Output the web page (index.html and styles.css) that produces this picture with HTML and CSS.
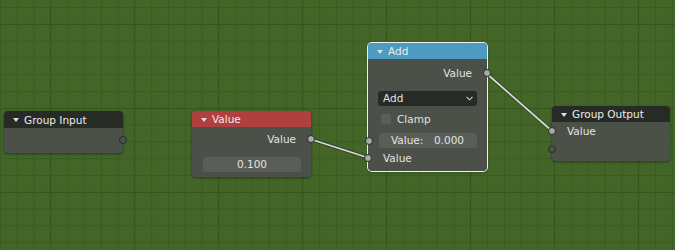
FILE: index.html
```html
<!DOCTYPE html>
<html lang="en">
  <head>
    <meta charset="UTF-8" />
    <title>Node Editor</title>
    <link rel="stylesheet" href="styles.css">
  </head>
  <body>
    <div class="canvas">
      <!-- links are drawn under the nodes -->
      <svg class="links" width="675" height="250" viewBox="0 0 675 250">
        <line class="link-shadow" x1="310" y1="139" x2="369" y2="158" />
        <line class="link" x1="310" y1="139" x2="369" y2="158" />
        <line class="link-shadow" x1="486" y1="73" x2="552" y2="131" />
        <line class="link" x1="486" y1="73" x2="552" y2="131" />
      </svg>

      <div class="node group-input">
        <div class="node-header">
          <span class="arrow"></span>Group Input
        </div>
        <div class="node-body">
          <div class="row row-out">
            <span class="socket socket-right hollow"></span>
          </div>
        </div>
      </div>

      <div class="node value-node">
        <div class="node-header red">
          <span class="arrow"></span>Value
        </div>
        <div class="node-body">
          <div class="row row-out">
            Value
            <span class="socket socket-right"></span>
          </div>
          <div class="field center">0.100</div>
        </div>
      </div>

      <div class="node add-node selected">
        <div class="node-header blue">
          <span class="arrow"></span>Add
        </div>
        <div class="node-body">
          <div class="row row-out">
            Value
            <span class="socket socket-right"></span>
          </div>
          <div class="dropdown">
            <span>Add</span>
            <svg class="chevron" width="7" height="5" viewBox="0 0 7 5">
              <path d="M0.5 0.8 L3.5 3.8 L6.5 0.8" />
            </svg>
          </div>
          <div class="check-row">
            <span class="checkbox"></span>
            Clamp
          </div>
          <div class="field split">
            <span>Value:</span>
            <span>0.000</span>
            <span class="socket socket-left field-socket"></span>
          </div>
          <div class="row row-in">
            Value
            <span class="socket socket-left"></span>
          </div>
        </div>
      </div>

      <div class="node group-output">
        <div class="node-header">
          <span class="arrow"></span>Group Output
        </div>
        <div class="node-body">
          <div class="row row-in">
            Value
            <span class="socket socket-left"></span>
          </div>
          <div class="row row-in">
            <span class="socket socket-left hollow"></span>
          </div>
        </div>
      </div>
    </div>
  </body>
</html>
```

FILE: styles.css
```css
body {
  margin: 0;
  padding: 0;
  background-color: #436628;
  font-family: "DejaVu Sans", "Liberation Sans", sans-serif;
  font-size: 10.5px;
  color: #e2e2e2;
}

.canvas {
  position: relative;
  width: 675px;
  height: 250px;
  overflow: hidden;
  background-color: #436628;
  background-image:
    linear-gradient(to right, #36541f 1px, transparent 1px),
    linear-gradient(to bottom, #36541f 1px, transparent 1px),
    linear-gradient(to right, #3a5b23 1px, transparent 1px),
    linear-gradient(to bottom, #3a5b23 1px, transparent 1px);
  background-size: 84px 84px, 84px 84px, 16.8px 16.8px, 16.8px 16.8px;
  background-position: 50px 0, 0 24px, 0 0, 0 7px;
}

.links {
  position: absolute;
  left: 0;
  top: 0;
}

.link-shadow {
  stroke: rgba(30, 30, 30, 0.4);
  stroke-width: 3.5;
  stroke-linecap: round;
}

.link {
  stroke: #d8d8d8;
  stroke-width: 1.8;
  stroke-linecap: round;
}

/* nodes sit on the free canvas */
.node {
  position: absolute;
  background-color: #4b5048;
  border-radius: 4px;
  box-shadow: 0 1px 3px rgba(0, 0, 0, 0.45);
}

.node.selected {
  box-shadow: 0 0 0 1px #f0f0f0, 0 1px 3px rgba(0, 0, 0, 0.45);
}

.group-input {
  left: 4px;
  top: 111px;
  width: 119px;
}

.value-node {
  left: 192px;
  top: 111px;
  width: 119px;
}

.add-node {
  left: 368px;
  top: 43px;
  width: 119px;
}

.group-output {
  left: 552px;
  top: 106px;
  width: 118px;
}

.node-header {
  height: 16px;
  line-height: 16px;
  padding-left: 9px;
  background-color: #272b25;
  border-radius: 4px 4px 0 0;
  color: #ececec;
  display: flex;
  align-items: center;
}

.group-input .node-header {
  height: 17px;
}

.node-header.red {
  background-color: #b03f3f;
}

.node-header.blue {
  background-color: #4d9bc0;
}

.arrow {
  width: 0;
  height: 0;
  border-left: 3px solid transparent;
  border-right: 3px solid transparent;
  border-top: 4px solid #e0e0e0;
  margin-right: 5px;
  margin-top: 1px;
}

.node-body {
  padding: 2px 0 5px;
}

.group-input .node-body {
  padding: 2px 0 3px;
}

.add-node .node-body {
  padding: 4px 0 5px;
}

.group-output .node-body {
  padding: 0 0 3px;
}

.row {
  position: relative;
  height: 20px;
  line-height: 20px;
}

.row-out {
  text-align: right;
  padding-right: 15px;
}

.row-in {
  padding-left: 15px;
}

.group-output .row {
  height: 18px;
  line-height: 18px;
}

.add-node .row-in {
  height: 16px;
  line-height: 16px;
  margin-top: 2px;
}

.socket {
  position: absolute;
  top: 50%;
  width: 6px;
  height: 6px;
  margin-top: -4px;
  border-radius: 50%;
  background-color: #a8a8a8;
  border: 1px solid #2a2a2a;
}

.socket.hollow {
  background-color: #4b5048;
}

.socket-right {
  right: -4px;
}

.socket-left {
  left: -4px;
}

.field {
  position: relative;
  height: 15px;
  line-height: 15px;
  margin: 8px 10px 0 11px;
  background-color: #5a5e58;
  border-radius: 3px;
}

.field.center {
  text-align: center;
}

.field.split {
  display: flex;
  justify-content: space-between;
  padding: 0 13px 0 12px;
  margin-top: 6px;
}

.field-socket {
  left: -14px;
}

.dropdown {
  height: 15px;
  line-height: 15px;
  margin: 8px 10px 0 10px;
  padding: 0 4px 0 5px;
  background-color: #272a26;
  border-radius: 3px;
  display: flex;
  justify-content: space-between;
  align-items: center;
}

.chevron path {
  fill: none;
  stroke: #d0d0d0;
  stroke-width: 1.1;
}

.check-row {
  display: flex;
  align-items: center;
  height: 16px;
  margin: 5px 0 0 13px;
}

.checkbox {
  width: 10px;
  height: 10px;
  background-color: #5d5d5d;
  border-radius: 2px;
  margin-right: 6px;
}
```
